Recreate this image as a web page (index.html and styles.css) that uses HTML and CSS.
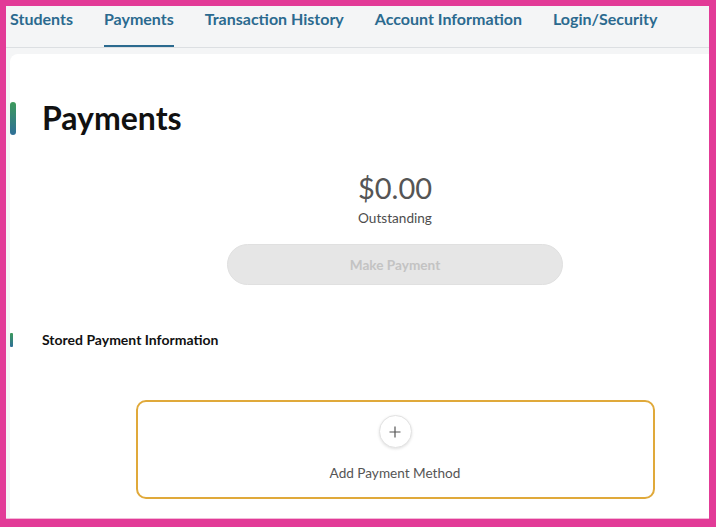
FILE: index.html
```html
<!DOCTYPE html>
<html lang="en">
<head>
<meta charset="utf-8">
<title>Payments</title>
<link rel="stylesheet" href="styles.css">
</head>
<body>
<div class="frame">
  <nav class="tabs">
    <a class="tab">Students</a>
    <a class="tab active">Payments</a>
    <a class="tab">Transaction History</a>
    <a class="tab">Account Information</a>
    <a class="tab">Login/Security</a>
  </nav>
  <main class="card">
    <div class="title-row">
      <span class="accent"></span>
      <h1 class="title">Payments</h1>
    </div>
    <section class="summary">
      <div class="amount">$0.00</div>
      <div class="amount-label">Outstanding</div>
      <button class="pay-btn" disabled>Make Payment</button>
    </section>
    <div class="section-row">
      <span class="accent small"></span>
      <h2 class="section-title">Stored Payment Information</h2>
    </div>
    <div class="add-card">
      <span class="plus-circle">
        <svg width="12" height="12" viewBox="0 0 12 12"><path d="M6 0.5V11.5M0.5 6H11.5" stroke="#555" stroke-width="1.2" fill="none"/></svg>
      </span>
      <span class="add-label">Add Payment Method</span>
    </div>
  </main>
</div>
</body>
</html>
```

FILE: styles.css
```css
* { box-sizing: border-box; }
html, body { margin: 0; padding: 0; }
body {
  width: 716px;
  height: 527px;
  overflow: hidden;
  background: #e23b97;
  font-family: Lato, "Open Sans", "Liberation Sans", sans-serif;
}
.frame {
  margin: 6px 7px 0 6px;
  height: 513px;
  background: #f4f5f6;
  overflow: hidden;
  border-bottom: 1px solid #f3b9d9;
}
.tabs {
  display: flex;
  gap: 31px;
  padding-left: 4px;
  border-bottom: 1px solid #dcdfe2;
}
.tab {
  display: block;
  height: 41px;
  padding-top: 4px;
  line-height: 18px;
  font-size: 16px;
  font-weight: 700;
  color: #2b6a8f;
  border-bottom: 2px solid transparent;
  white-space: nowrap;
}
.tab.active { border-bottom-color: #2b6a8f; }
.card {
  margin: 6px 0 0 4px;
  width: 770px;
  height: 470px;
  background: #fff;
  border-radius: 8px 8px 0 0;
  padding-top: 46px;
}
.title-row, .section-row {
  display: flex;
  align-items: center;
  gap: 26px;
}
.accent {
  width: 6px;
  height: 33px;
  border-radius: 3px;
  background: linear-gradient(#3c9a5b, #2f6f98);
}
.accent.small {
  width: 3px;
  height: 14px;
  border-radius: 1px;
}
.section-row { gap: 29px; margin-top: 46px; }
.title {
  margin: 0;
  font-size: 32px;
  line-height: 36px;
  font-weight: 700;
  color: #111;
}
.summary {
  display: flex;
  flex-direction: column;
  align-items: center;
  margin-top: 35px;
}
.amount {
  font-size: 29px;
  line-height: 34px;
  font-weight: 400;
  color: #555;
}
.amount-label {
  margin-top: 4px;
  font-size: 13.6px;
  line-height: 18px;
  color: #4d4d4d;
}
.pay-btn {
  margin-top: 17px;
  width: 336px;
  height: 41px;
  border: 1px solid #e0e0e0;
  border-radius: 21px;
  background: #e6e6e6;
  font-family: inherit;
  font-size: 13.6px;
  font-weight: 700;
  color: #c3c3c3;
}
.section-title {
  margin: 0;
  font-size: 14px;
  line-height: 18px;
  font-weight: 700;
  color: #111;
}
.add-card {
  margin: 51px auto 0;
  width: 519px;
  height: 99px;
  border: 2px solid #e0a93a;
  border-radius: 10px;
  display: flex;
  flex-direction: column;
  align-items: center;
  padding-top: 13px;
}
.plus-circle {
  width: 33px;
  height: 33px;
  border-radius: 50%;
  border: 1px solid #e2e2e2;
  box-shadow: 0 1px 3px rgba(0,0,0,0.12);
  display: flex;
  align-items: center;
  justify-content: center;
  background: #fff;
}
.add-label {
  margin-top: 16px;
  font-size: 13.6px;
  line-height: 18px;
  color: #555;
}
```
